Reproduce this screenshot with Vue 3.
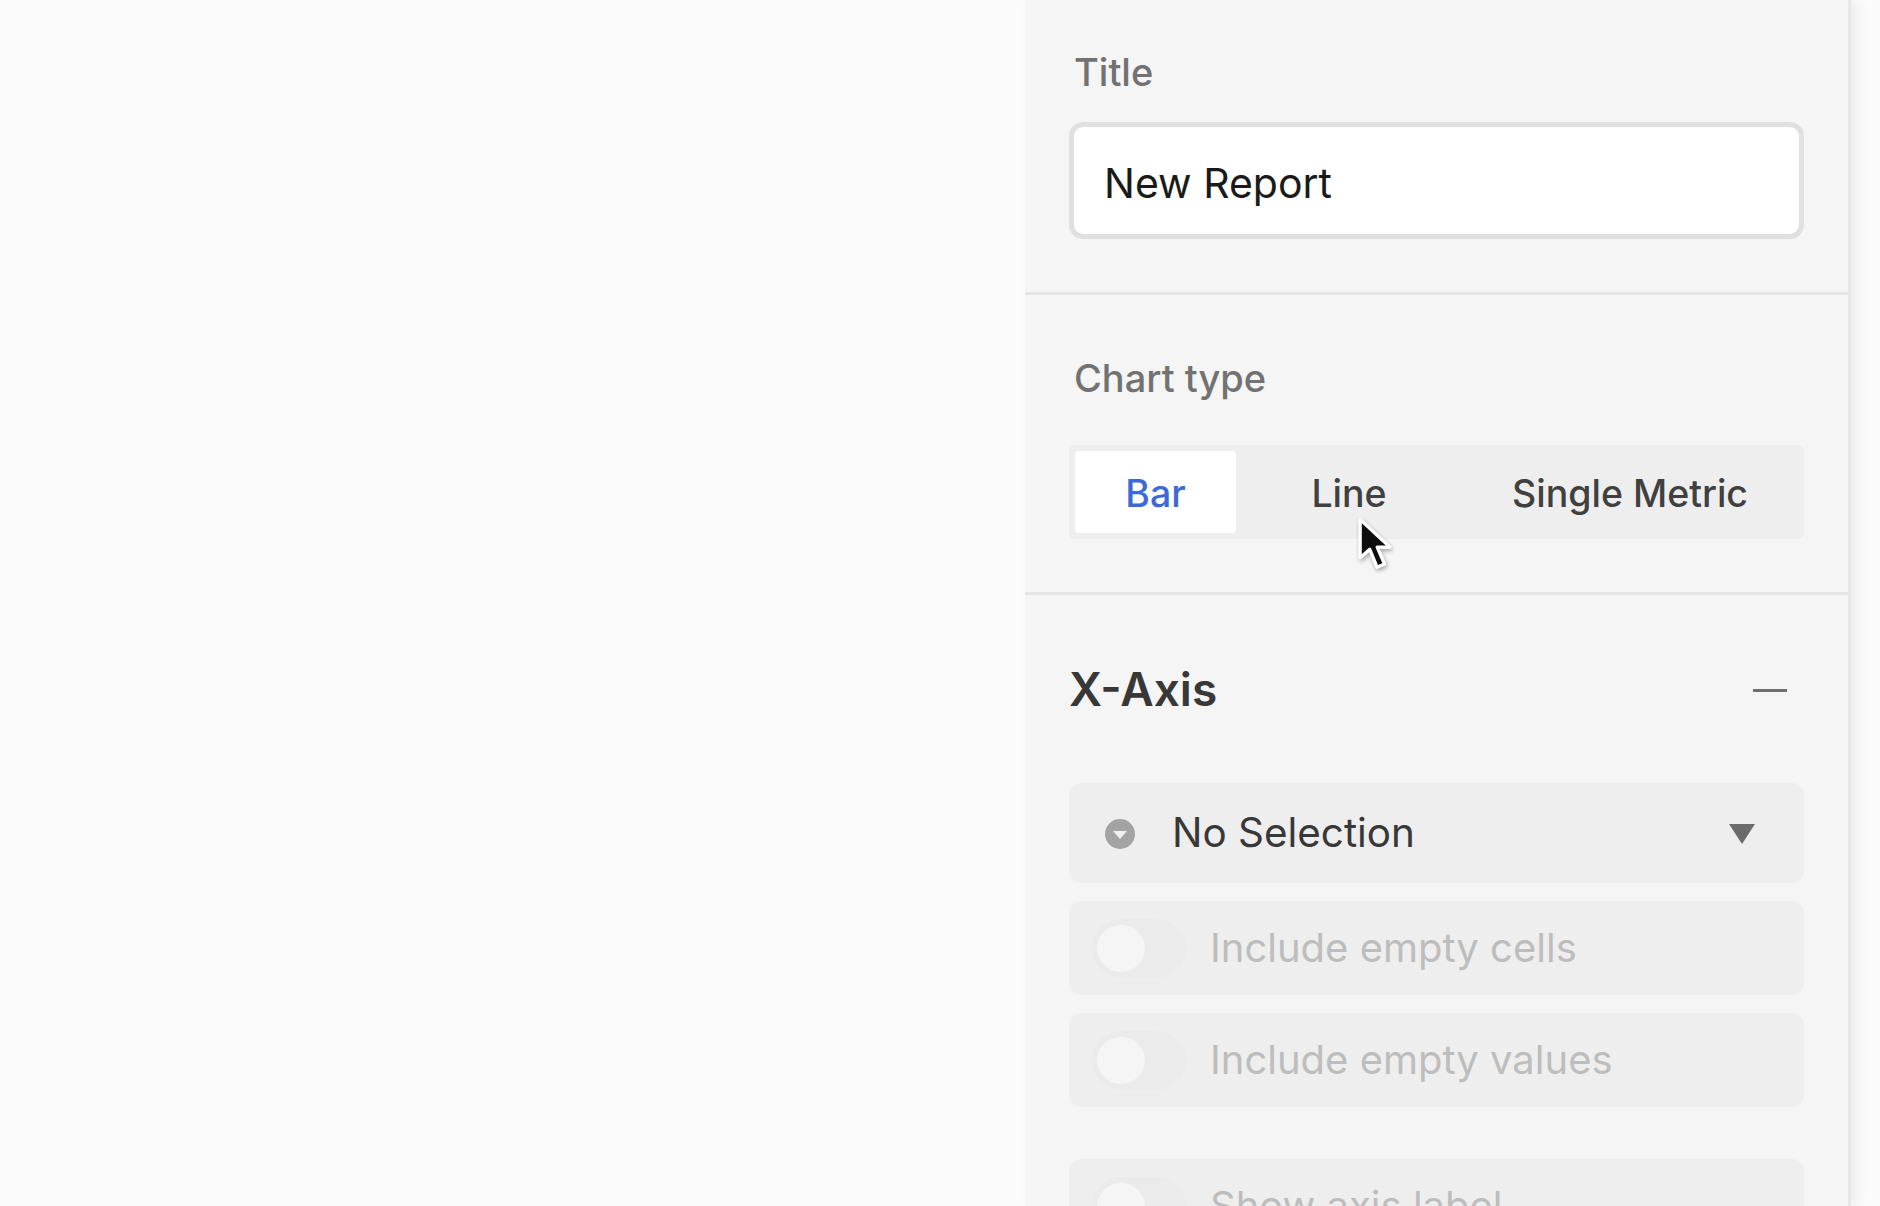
<script setup>
const toggles = ['Include empty cells', 'Include empty values']
</script>

<template>
  <div class="page">
    <div class="canvas"></div>
    <aside class="panel">
      <section class="section title-section">
        <div class="label">Title</div>
        <div class="input">New Report</div>
      </section>
      <section class="section chart-section">
        <div class="label">Chart type</div>
        <div class="segments">
          <div class="segment active">Bar</div>
          <div class="segment">Line</div>
          <div class="segment">Single Metric</div>
        </div>
      </section>
      <section class="section axis-section">
        <div class="axis-head">
          <h2>X-Axis</h2>
          <span class="minus"></span>
        </div>
        <div class="select">
          <svg class="sel-icon" width="30" height="30" viewBox="0 0 30 30">
            <circle cx="15" cy="15" r="15" fill="#a3a3a3" />
            <path d="M8 12h14l-7 8z" fill="#f0f0f0" />
          </svg>
          <span class="sel-text">No Selection</span>
          <svg class="caret" width="26" height="20" viewBox="0 0 26 20">
            <path d="M0 0h26L13 20z" fill="#6b6b6b" />
          </svg>
        </div>
        <div class="rows">
          <div v-for="t in toggles" :key="t" class="row">
            <span class="toggle"><span class="knob"></span></span>
            <span class="row-text">{{ t }}</span>
          </div>
        </div>
        <div class="row show-label">
          <span class="toggle"><span class="knob"></span></span>
          <span class="row-text">Show axis label</span>
        </div>
      </section>
      <svg class="cursor" width="38" height="56" viewBox="0 0 36 52">
        <defs>
          <filter id="cursor-shadow" x="-40%" y="-40%" width="180%" height="180%">
            <feDropShadow dx="1" dy="2" stdDeviation="2" flood-color="#000" flood-opacity="0.35" />
          </filter>
        </defs>
        <path d="M4 2v36l9-8 7 17 7-3-7-16h12z" fill="#111" stroke="#fff" stroke-width="3" stroke-linejoin="round" filter="url(#cursor-shadow)" />
      </svg>
    </aside>
    <div class="rest"></div>
  </div>
</template>

<style>
html, body { margin: 0; background: #fbfbfb; }
</style>

<style scoped>
.page {
  display: flex;
  width: 1880px;
  height: 1206px;
  overflow: hidden;
  background: #fbfbfb;
  font-family: Inter, "Liberation Sans", sans-serif;
}
.canvas { width: 1025px; flex: none; }
.rest { flex: 1; }
.panel {
  position: relative;
  width: 823px;
  flex: none;
  background: #f5f5f5;
  box-shadow: 3px 0 0 #e7e7e7, 8px 0 14px rgba(0, 0, 0, 0.07);
}
.section {
  padding: 0 44px;
  box-sizing: border-box;
  border-bottom: 3px solid #e4e4e4;
}
.title-section { height: 295px; padding-top: 50px; }
.chart-section { height: 300px; padding-top: 61px; }
.axis-section { border-bottom: 0; padding-top: 0; }
.label {
  padding-left: 5px;
  font-size: 38px;
  line-height: 44px;
  font-weight: 500;
  color: #727272;
}
.input {
  margin-top: 28px;
  height: 117px;
  box-sizing: border-box;
  border: 5px solid #e0e0e0;
  border-radius: 14px;
  background: #fff;
  padding: 3px 0 0 30px;
  font-size: 41px;
  line-height: 106px;
  color: #1a1a1a;
}
.segments {
  margin-top: 45px;
  height: 94px;
  box-sizing: border-box;
  padding: 6px;
  display: grid;
  grid-template-columns: 161px 226px 1fr;
  background: #eeeeee;
  border-radius: 6px;
}
.segment {
  display: flex;
  align-items: center;
  justify-content: center;
  padding-top: 2px;
  box-sizing: border-box;
  font-size: 37.5px;
  font-weight: 500;
  color: #404040;
  border-radius: 4px;
}
.segment.active { background: #fff; color: #3d68d8; }
.axis-head {
  height: 188px;
  display: flex;
  align-items: center;
  justify-content: space-between;
}
.axis-head h2 {
  margin: 0;
  font-size: 46px;
  font-weight: 600;
  color: #383838;
}
.minus {
  width: 34px;
  height: 3px;
  margin-top: 2px;
  margin-right: 17px;
  background: #6e6e6e;
}
.select {
  height: 100px;
  display: flex;
  align-items: center;
  background: #eeeeee;
  border-radius: 12px;
  padding: 0 49px 0 36px;
}
.caret { margin-top: 2px; }
.sel-icon { margin-top: 2px; }
.sel-text {
  flex: 1;
  margin-left: 37px;
  margin-bottom: 1px;
  font-size: 40.4px;
  color: #383838;
}
.rows {
  margin-top: 18px;
  display: flex;
  flex-direction: column;
  gap: 18px;
}
.row {
  height: 94px;
  display: flex;
  align-items: center;
  background: #eeeeee;
  border-radius: 12px;
  padding-left: 23px;
}
.show-label { margin-top: 52px; }
.toggle {
  width: 94px;
  height: 59px;
  flex: none;
  box-sizing: border-box;
  padding: 6px 5px;
  border-radius: 30px;
  background: #ebebeb;
}
.knob {
  display: block;
  width: 48px;
  height: 47px;
  border-radius: 50%;
  background: #f5f5f5;
}
.row-text {
  margin-left: 24px;
  margin-bottom: 2px;
  font-size: 40px;
  color: #bdbdbd;
}
.cursor {
  position: absolute;
  left: 331px;
  top: 517px;
}
</style>
